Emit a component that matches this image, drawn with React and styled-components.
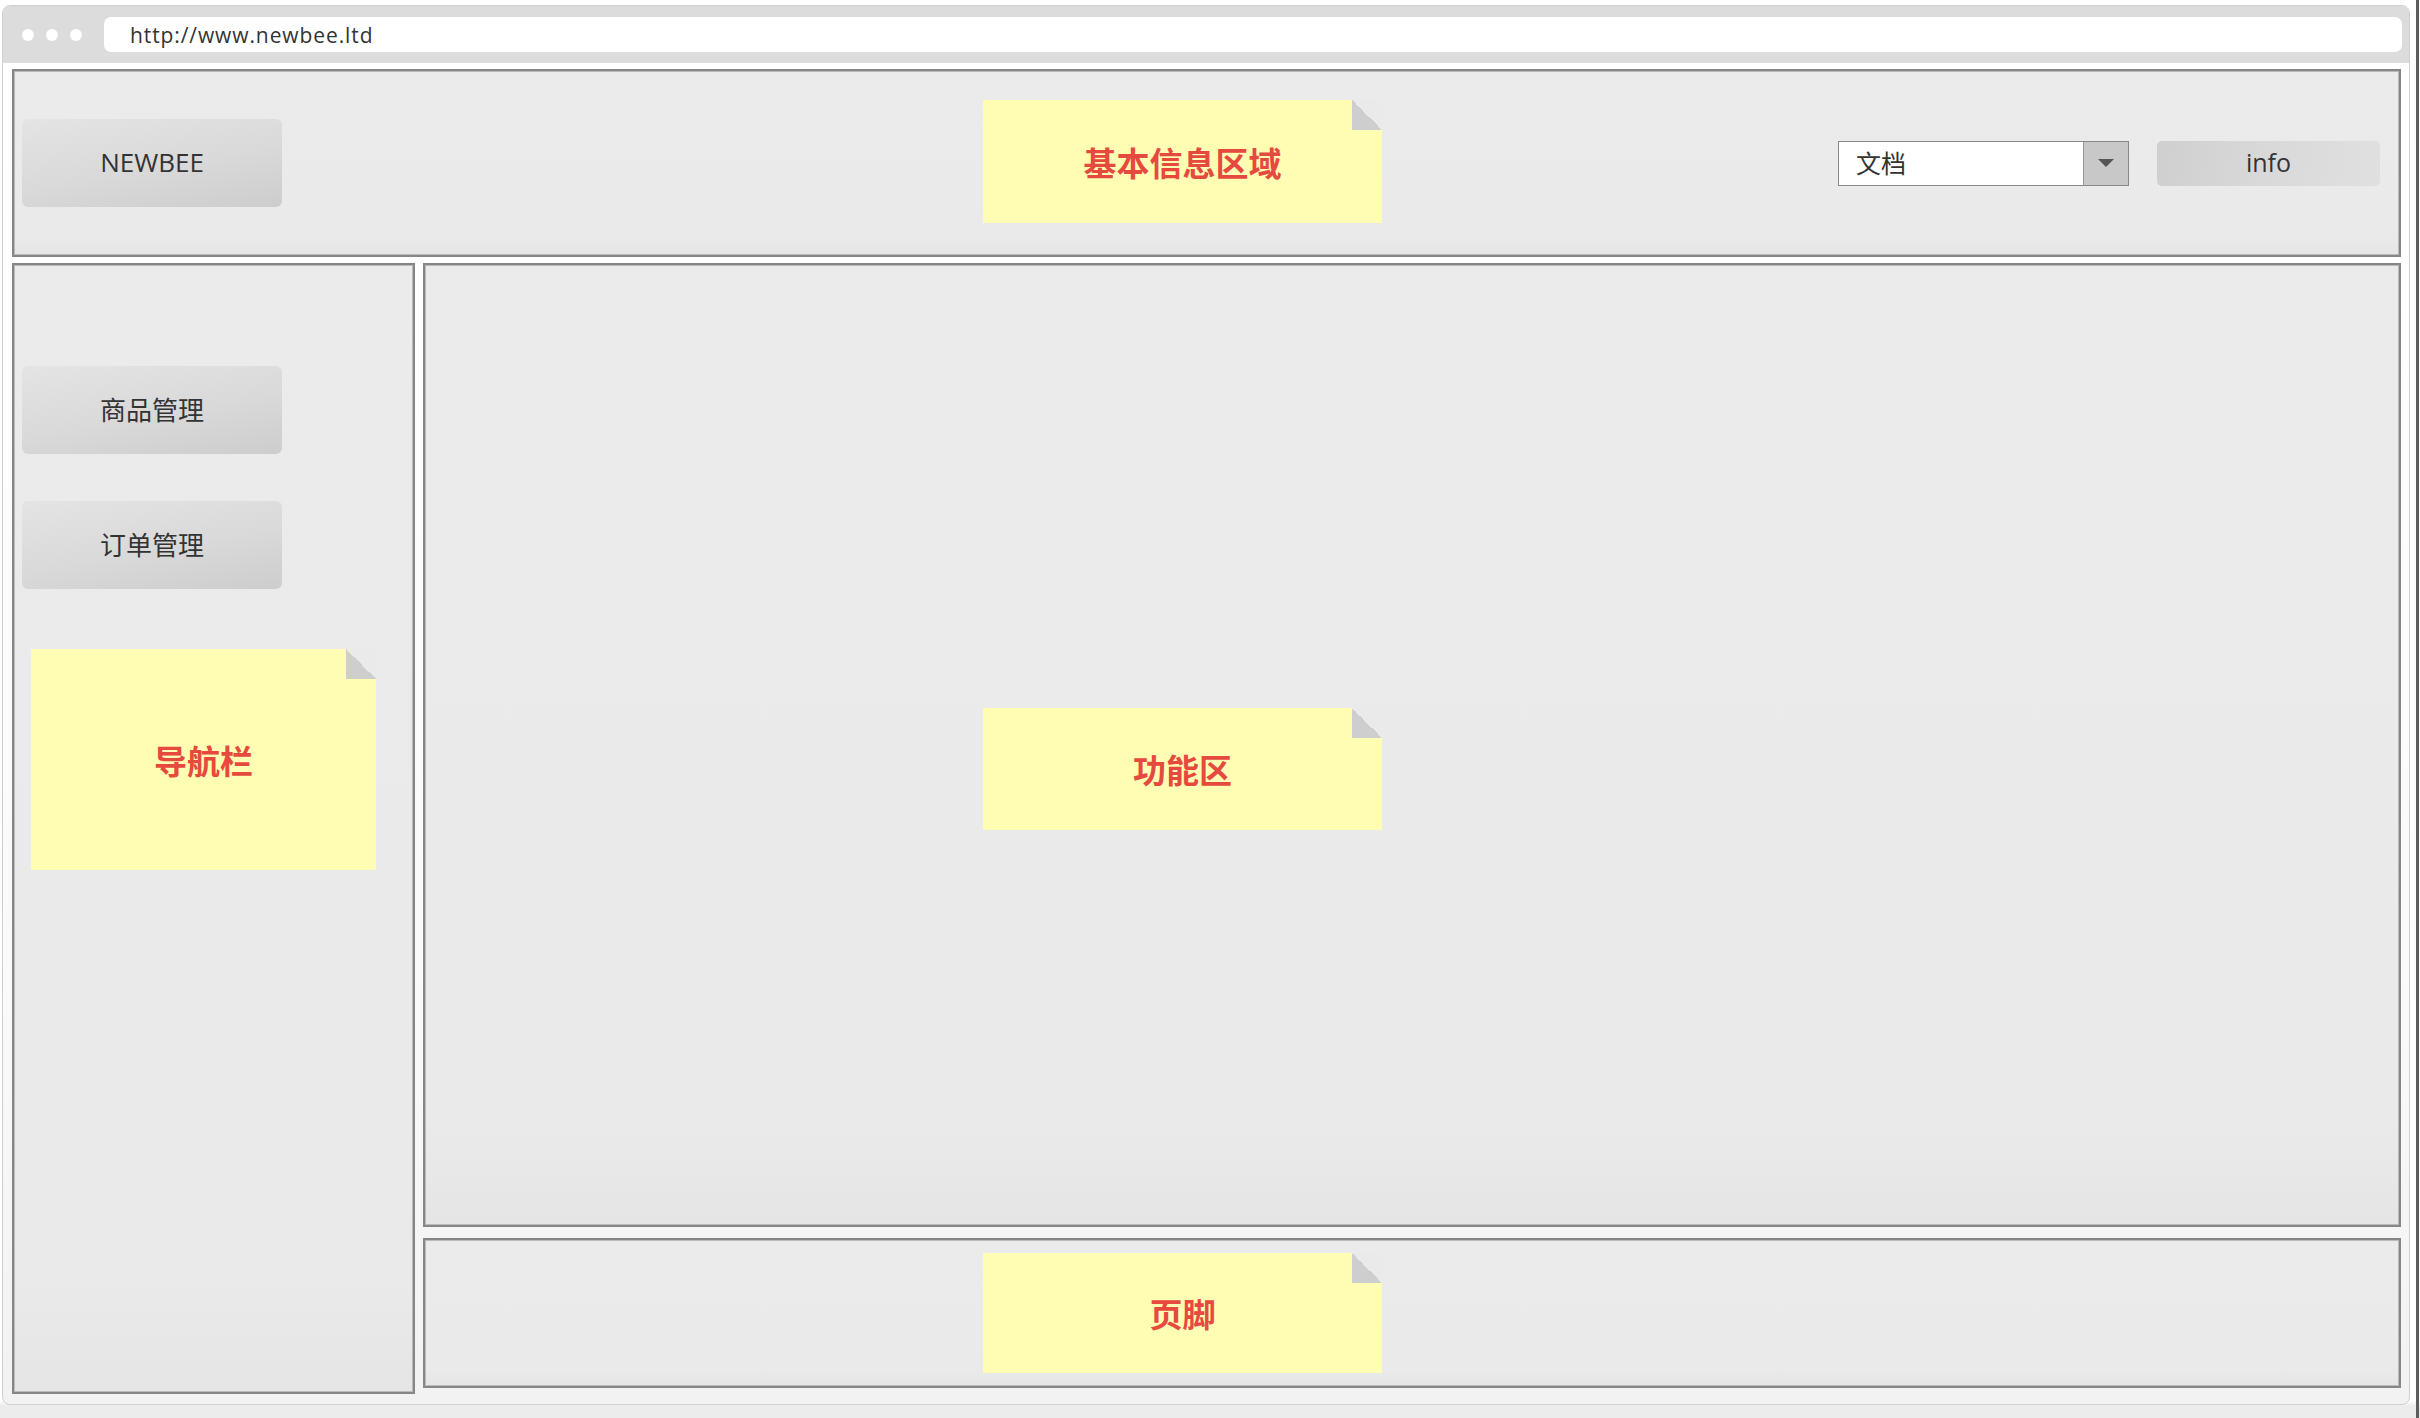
import React from "react";
import styled, { createGlobalStyle } from "styled-components";

const GlobalStyle = createGlobalStyle`
  * {
    box-sizing: border-box;
  }
  html,
  body {
    margin: 0;
    padding: 0;
    background: #fff;
  }
  body {
    font-family: "Open Sans", "Noto Sans CJK SC", sans-serif;
    color: #333;
  }
`;

const Page = styled.div`
  display: flex;
  height: 1418px;
  width: 2420px;
  background: linear-gradient(to bottom, #fff 1400px, #ececec 1406px);
`;

const Frame = styled.div`
  display: flex;
  flex-direction: column;
  width: 2408px;
  height: 1400px;
  margin: 5px 0 0 2px;
  border: 1px solid #cfcfcf;
  border-radius: 8px;
  overflow: hidden;
  background: linear-gradient(to bottom, #fff 0%, #fafafa 70%, #f2f2f2 100%);
`;

const EdgeStrip = styled.div`
  width: 3px;
  margin-left: 6px;
  background: #5c5c5c;
`;

const ChromeBar = styled.div`
  display: flex;
  align-items: center;
  height: 57px;
  padding: 0 7px 0 19px;
  background: #dcdcdc;
`;

const Dots = styled.div`
  display: flex;
  gap: 12px;
  margin-right: 22px;
`;

const Dot = styled.span`
  width: 12px;
  height: 12px;
  border-radius: 50%;
  background: #fff;
`;

const UrlBar = styled.div`
  flex: 1;
  height: 35px;
  display: flex;
  align-items: center;
  padding-left: 26px;
  background: #fff;
  border-radius: 7px;
  font-size: 21px;
  color: #333;
  letter-spacing: 0.9px;
`;

const Content = styled.div`
  flex: 1;
  display: flex;
  flex-direction: column;
  gap: 6px;
  padding: 6px 8px 10px 9px;
`;

const Panel = styled.div`
  display: flex;
  border: 2px solid #868686;
  box-shadow: inset 0 0 0 1px #bababa;
  background: linear-gradient(to bottom, #ebebeb 0%, #eaeaea 90%, #e5e5e5 100%);
`;

const Header = styled(Panel)`
  height: 188px;
  align-items: center;
  padding: 0 19px 0 8px;
`;

const BodyRow = styled.div`
  display: flex;
  gap: 8px;
  height: 1131px;
`;

const Sidebar = styled(Panel)`
  width: 403px;
  flex-direction: column;
  align-items: flex-start;
  padding: 101px 0 0 8px;
`;

const RightColumn = styled.div`
  flex: 1;
  display: flex;
  flex-direction: column;
  gap: 11px;
`;

const FunctionArea = styled(Panel)`
  height: 964px;
  align-items: flex-start;
  padding: 443px 0 0 558px;
`;

const Footer = styled(Panel)`
  height: 150px;
  align-items: center;
  padding-left: 558px;
`;

const GrayButton = styled.div`
  width: 260px;
  height: 88px;
  display: flex;
  align-items: center;
  justify-content: center;
  padding-bottom: 2px;
  border-radius: 6px;
  background: linear-gradient(170deg, #e4e4e4 0%, #d9d9d9 55%, #cdcdcd 100%);
  font-size: ${(p) => (p.$cjk ? "26px" : "26px")};
  color: #333;
  & + & {
    margin-top: 47px;
  }
`;

const StickyNote = styled.div`
  position: relative;
  width: ${(p) => p.$w}px;
  height: ${(p) => p.$h}px;
  margin-left: ${(p) => p.$ml || 0}px;
  margin-top: ${(p) => p.$mt || 0}px;
  flex-shrink: 0;
  display: flex;
  align-items: center;
  justify-content: center;
  background: #fffcb4;
  font-family: "Noto Sans CJK SC", sans-serif;
  font-weight: 700;
  font-size: 33px;
  color: #e64a3e;

  &::after {
    content: "";
    position: absolute;
    top: 0;
    right: 0;
    width: 30px;
    height: 30px;
    background: linear-gradient(to bottom left, #eaeaea 50%, #cecece 50%);
  }
`;

const Controls = styled.div`
  display: flex;
  align-items: center;
  gap: 28px;
  margin-left: auto;
`;

const Select = styled.div`
  display: flex;
  width: 291px;
  height: 45px;
  border: 1px solid #888;
  background: #fff;
`;

const SelectValue = styled.div`
  flex: 1;
  display: flex;
  align-items: center;
  padding: 0 0 3px 17px;
  font-family: "Noto Sans CJK SC", sans-serif;
  font-size: 25px;
  color: #333;
`;

const SelectArrow = styled.div`
  width: 45px;
  display: flex;
  align-items: center;
  justify-content: center;
  background: #c8c8c8;
  border-left: 1px solid #999;

  &::before {
    content: "";
    border-left: 8px solid transparent;
    border-right: 8px solid transparent;
    border-top: 8px solid #555;
  }
`;

const InfoButton = styled.div`
  width: 223px;
  height: 45px;
  display: flex;
  align-items: center;
  justify-content: center;
  padding-bottom: 2px;
  border-radius: 5px;
  background: linear-gradient(100deg, #cfcfcf 0%, #d9d9d9 50%, #e0e0e0 100%);
  font-size: 25px;
  color: #333;
`;

const App = () => {
  return (
    <Page>
      <GlobalStyle />
      <Frame>
        <ChromeBar>
          <Dots>
            <Dot />
            <Dot />
            <Dot />
          </Dots>
          <UrlBar>http://www.newbee.ltd</UrlBar>
        </ChromeBar>
        <Content>
          <Header>
            <GrayButton>NEWBEE</GrayButton>
            <StickyNote $w={399} $h={123} $ml={701} $mt={-3}>
              基本信息区域
            </StickyNote>
            <Controls>
              <Select>
                <SelectValue>文档</SelectValue>
                <SelectArrow />
              </Select>
              <InfoButton>info</InfoButton>
            </Controls>
          </Header>
          <BodyRow>
            <Sidebar>
              <GrayButton $cjk>商品管理</GrayButton>
              <GrayButton $cjk>订单管理</GrayButton>
              <StickyNote $w={345} $h={221} $ml={9} $mt={60}>
                导航栏
              </StickyNote>
            </Sidebar>
            <RightColumn>
              <FunctionArea>
                <StickyNote $w={399} $h={122}>
                  功能区
                </StickyNote>
              </FunctionArea>
              <Footer>
                <StickyNote $w={399} $h={120}>
                  页脚
                </StickyNote>
              </Footer>
            </RightColumn>
          </BodyRow>
        </Content>
      </Frame>
      <EdgeStrip />
    </Page>
  );
};

export default App;
